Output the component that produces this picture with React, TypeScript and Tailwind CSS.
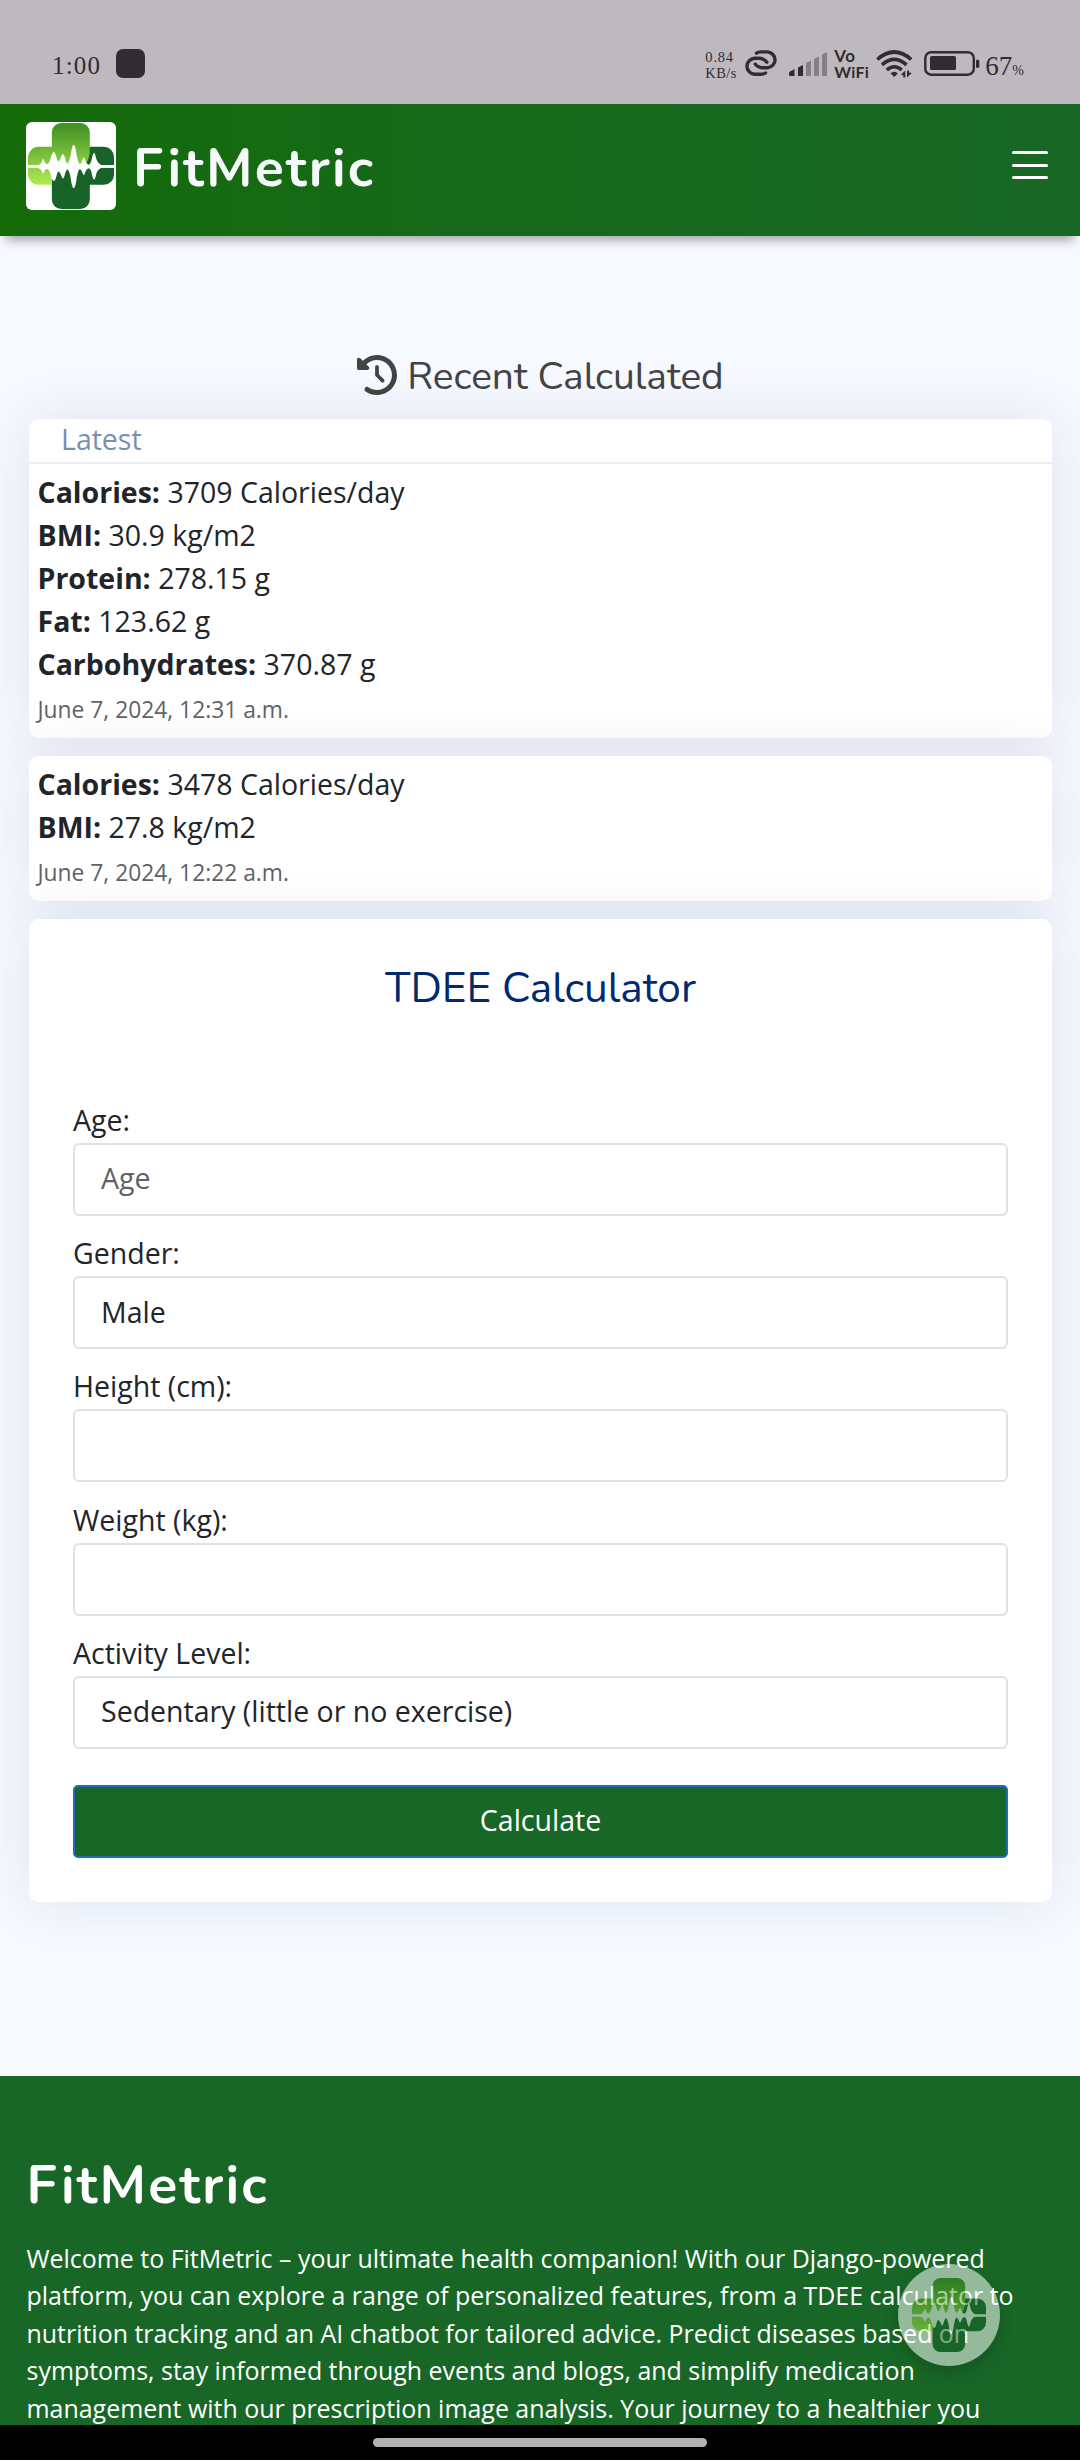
import { useId } from "react";
import { FaClockRotateLeft } from "react-icons/fa6";

const WAVE =
  "M-4 125 H30 Q39 123 42 112 Q45 103 48 112 Q51 122 57 123 Q64 121 69 100 Q77 72 84 100 Q87 113 91 115 Q95 112 99 100 Q104 84 109 100 Q113 118 117 121 Q124 118 129 84 Q136 46 143 84 Q148 118 154 122 Q159 120 162 110 Q166 96 170 110 Q174 123 181 124 Q188 122 191 102 Q197 76 202 102 Q206 120 218 125 H260 V134 H218 Q206 138 202 156 Q197 180 191 156 Q188 137 181 135 Q174 136 170 148 Q166 162 162 148 Q159 139 154 137 Q148 140 143 176 Q136 212 129 176 Q124 141 117 138 Q113 141 109 156 Q104 174 99 156 Q95 146 91 144 Q87 146 84 160 Q77 186 69 160 Q64 138 57 136 Q51 137 48 146 Q45 155 42 146 Q39 136 30 134 H-4 Z";

function LogoMark({ className }: { className: string }) {
  const id = useId();
  return (
    <svg viewBox="0 0 256 256" className={className} aria-hidden="true">
      <defs>
        <linearGradient id={id} x1="0" y1="0" x2="0" y2="184" gradientUnits="userSpaceOnUse">
          <stop offset="0.05" stopColor="#439325" />
          <stop offset="1" stopColor="#b0ec50" />
        </linearGradient>
      </defs>
      <path d="M150 71 H226 A30 30 0 0 1 256 101 V154 A30 30 0 0 1 226 184 H184 V228 A28 28 0 0 1 156 256 H99 A28 28 0 0 1 71 228 V125 H150 Z" fill="#186428" />
      <path d="M71 71 V28 A28 28 0 0 1 99 0 H156 A28 28 0 0 1 184 28 V88 Q182 104 170 128 L150 130 H71 V184 H32 A32 32 0 0 1 0 152 V103 A32 32 0 0 1 32 71 Z" fill={`url(#${id})`} />
      <path d={WAVE} fill="#fff" />
    </svg>
  );
}

function StatusBar() {
  return (
    <div className="flex h-[104px] shrink-0 items-start bg-[#beb9bf] pl-[52px] pr-[56px] font-['Liberation_Serif',serif] text-[#302d31]">
      <span className="mt-[50px] text-[25px] leading-[32px] tracking-[1.200px]">1:00</span>
      <span className="ml-[15px] mt-[49px] size-[29px] rounded-[7px] bg-[#302d31]" />
      <div className="ml-auto mt-[49px] w-[34px] text-[14.500px] leading-[16px]">
        <div className="whitespace-nowrap tracking-[0.8px]">0.84</div>
        <div className="whitespace-nowrap tracking-[0.4px]">KB/s</div>
      </div>
      <svg viewBox="0 0 34 26" className="ml-[5px] mt-[50px] h-[26px] w-[34px]" fill="none" stroke="currentColor" strokeWidth="3.4" strokeLinecap="round">
        <path d="M12.500 3.200 C14 2 15.500 1.900 17 1.900 H23.500 A8.500 8 0 0 1 23.500 17.800 H19 C15.500 17.800 13 16.300 11.200 14" />
        <path d="M21.500 23 C20 24.100 18.500 24.200 17 24.200 H10.500 A8.500 8 0 0 1 10.500 8.300 H15 C18.500 8.300 21 9.800 22.800 12.100" />
      </svg>
      <svg viewBox="0 0 38 24" className="ml-[11px] mt-[52px] h-6 w-[38px]">
        <path d="M0 21 Q0 20 1 19.500 L5.500 17 V24 H1.500 Q0 24 0 22.500 Z M9 15.500 L14 13 V24 H9 Z" fill="#302d31" />
        <path d="M17 11 L22 8.500 V24 H17 Z M25 7 L30 4.500 V24 H25 Z M33 2.500 L38 0 V24 H33 Z" fill="#858087" />
      </svg>
      <div className="ml-[7px] mt-[48px] w-[34px] font-['Lato',sans-serif] text-[16px] font-bold leading-[16px]">
        <div className="h-[16px] text-[17px] leading-[15px] tracking-[0.4px]">Vo</div>
        <div className="h-[16px] whitespace-nowrap tracking-[0.2px]">WiFi</div>
      </div>
      <svg viewBox="0 0 37 28" className="ml-[8px] mt-[50px] h-7 w-[37px]" fill="none" stroke="currentColor" strokeWidth="3.600">
        <path d="M1.300 9.500 Q18.200 -5.500 35.200 9.500" />
        <path d="M6 14.800 Q18.200 4 30.500 14.800" />
        <path d="M10.800 20 Q18.200 13.500 25.700 20" />
        <path d="M14.500 23.300 Q18.200 20 21.900 23.300 L18.200 27 Z" fill="currentColor" stroke="none" />
        <path d="M25 24.500 L29.300 20.500 V27.500 H27.300 V25.500 Z M31 20.500 H33 V22.500 L35.800 23 L31 27.500 Z" fill="currentColor" stroke="none" />
      </svg>
      <svg viewBox="0 0 56 26" className="ml-[11px] mt-[50px] h-[26px] w-[56px]">
        <rect x="1.300" y="2.200" width="48.500" height="22.500" rx="6" fill="none" stroke="#302d31" strokeWidth="2.400" />
        <rect x="6" y="6" width="26" height="14" rx="1.500" fill="#302d31" />
        <rect x="52" y="9.500" width="3.300" height="8.500" rx="1.600" fill="#302d31" />
      </svg>
      <div className="ml-[5px] mt-[50px] flex items-baseline leading-[32px]">
        <span className="text-[27px]">67</span>
        <span className="text-[14px]">%</span>
      </div>
    </div>
  );
}

function Header() {
  return (
    <header className="flex h-[132px] shrink-0 items-start bg-linear-to-r from-[#146b08] to-[#186726] pl-[26px] pr-[32px] pt-[18px] shadow-[0_10px_10px_-6px_rgba(0,0,0,0.36)]">
      <div className="flex items-center gap-[17px]">
        <div className="flex h-[88px] w-[90px] items-center justify-center rounded-md bg-white">
          <LogoMark className="size-[86px]" />
        </div>
        <span className="pt-[6px] font-['Nunito','Lato',sans-serif] text-[53.600px] font-bold leading-[60px] tracking-[2.200px] text-[#f6f9fa]">FitMetric</span>
      </div>
      <button aria-label="Menu" className="ml-auto mt-[29px] flex w-9 flex-col gap-[9.500px]">
        <span className="h-[3px] rounded-full bg-white" />
        <span className="h-[3px] rounded-full bg-white" />
        <span className="h-[3px] rounded-full bg-white" />
      </button>
    </header>
  );
}

const CARD_SHADOW = "rounded-[10px] bg-white shadow-[0_0_54px_rgba(1,41,112,0.1)]";

type Entry = { rows: [string, string][]; date: string };

const LATEST: Entry = {
  rows: [
    ["Calories:", "3709 Calories/day"],
    ["BMI:", "30.9 kg/m2"],
    ["Protein:", "278.15 g"],
    ["Fat:", "123.62 g"],
    ["Carbohydrates:", "370.87 g"],
  ],
  date: "June 7, 2024, 12:31 a.m.",
};

const PREVIOUS: Entry = {
  rows: [
    ["Calories:", "3478 Calories/day"],
    ["BMI:", "27.8 kg/m2"],
  ],
  date: "June 7, 2024, 12:22 a.m.",
};

function EntryBody({ entry }: { entry: Entry }) {
  return (
    <div className="px-[8.500px] pb-[9.300px] pt-[7.300px]">
      {entry.rows.map(([label, value]) => (
        <p key={label}>
          <strong className="font-bold">{label}</strong> {value}
        </p>
      ))}
      <p className="h-[42.900px] text-[#5f6368]">
        <small className="text-[22.800px]">{entry.date}</small>
      </p>
    </div>
  );
}

const FIELDS = [
  { label: "Age:", value: "Age", muted: true },
  { label: "Gender:", value: "Male", muted: false },
  { label: "Height (cm):", value: "", muted: false },
  { label: "Weight (kg):", value: "", muted: false },
  { label: "Activity Level:", value: "Sedentary (little or no exercise)", muted: false },
];

const FOOTER_LINES = [
  "Welcome to FitMetric – your ultimate health companion! With our Django-powered",
  "platform, you can explore a range of personalized features, from a TDEE calculator to",
  "nutrition tracking and an AI chatbot for tailored advice. Predict diseases based on",
  "symptoms, stay informed through events and blogs, and simplify medication",
  "management with our prescription image analysis. Your journey to a healthier you",
];

export default function App() {
  return (
    <div className="relative flex h-[2460px] w-[1080px] flex-col overflow-hidden bg-[#f6f9ff] font-['Open_Sans',sans-serif] text-[28.500px] leading-[42.900px] text-[#212529]">
      <StatusBar />
      <Header />

      <main className="flex grow flex-col pl-[29px] pr-[28px] pt-[117px]">
        <h4 className="flex h-[44px] items-center justify-center gap-[10px] font-['Nunito','Lato',sans-serif] text-[38.900px] leading-[44px] text-[#444444]">
          <FaClockRotateLeft className="size-[40px]" />
          <span className="pt-[4px]">Recent Calculated</span>
        </h4>

        <section className={`mt-[22px] ${CARD_SHADOW}`}>
          <div className="h-[45px] border-b-2 border-[#ebeef4] pl-[32px] leading-[41px] text-[#798eb3]">Latest</div>
          <EntryBody entry={LATEST} />
        </section>

        <section className={`mt-[17.500px] ${CARD_SHADOW}`}>
          <EntryBody entry={PREVIOUS} />
        </section>

        <section className={`mt-[18px] px-[44px] pb-[44px] pt-[44px] ${CARD_SHADOW}`}>
          <h5 className="mb-[86px] text-center font-['Nunito','Lato',sans-serif] text-[42.300px] leading-[50px] text-[#012970]">
            TDEE Calculator
          </h5>
          <form className="flex flex-col gap-[16.400px]">
            {FIELDS.map((f) => (
              <div key={f.label} className="flex flex-col gap-[1px]">
                <label>{f.label}</label>
                <div
                  className={`flex h-[73px] items-center rounded-md border-2 border-[#dee2e6] bg-white pb-[1px] pl-[26px] ${
                    f.muted ? "text-[#5e6267]" : "text-[#212529]"
                  }`}
                >
                  {f.value}
                </div>
              </div>
            ))}
          </form>
          <button className="mt-[36px] flex h-[73px] w-full items-center justify-center rounded-[5px] border-2 border-[#1f6bbf] bg-[#186726] pb-[1px] text-white">
            Calculate
          </button>
        </section>
      </main>

      <footer className="h-[349px] shrink-0 overflow-hidden bg-[#186726] px-[26.500px] pt-[80px] text-white">
        <div className="font-['Nunito','Lato',sans-serif] text-[53.600px] font-bold leading-[60px] tracking-[2.200px]">FitMetric</div>
        <div className="mt-[24px] text-[24.950px] leading-[37.400px]">
          {FOOTER_LINES.map((line) => (
            <p key={line} className="whitespace-nowrap">
              {line}
            </p>
          ))}
        </div>
      </footer>

      <div className="flex h-[35px] shrink-0 justify-center bg-black pt-[13px]">
        <span className="h-[9px] w-[334px] rounded-full bg-[#b3b3b3]" />
      </div>

      <button
        aria-label="Open chat"
        className="absolute bottom-[94px] right-[80px] flex size-[102px] items-center justify-center rounded-full bg-white opacity-[0.54] shadow-[0_7px_14px_rgba(0,0,0,0.3)]"
      >
        <LogoMark className="size-[74px]" />
      </button>
    </div>
  );
}
